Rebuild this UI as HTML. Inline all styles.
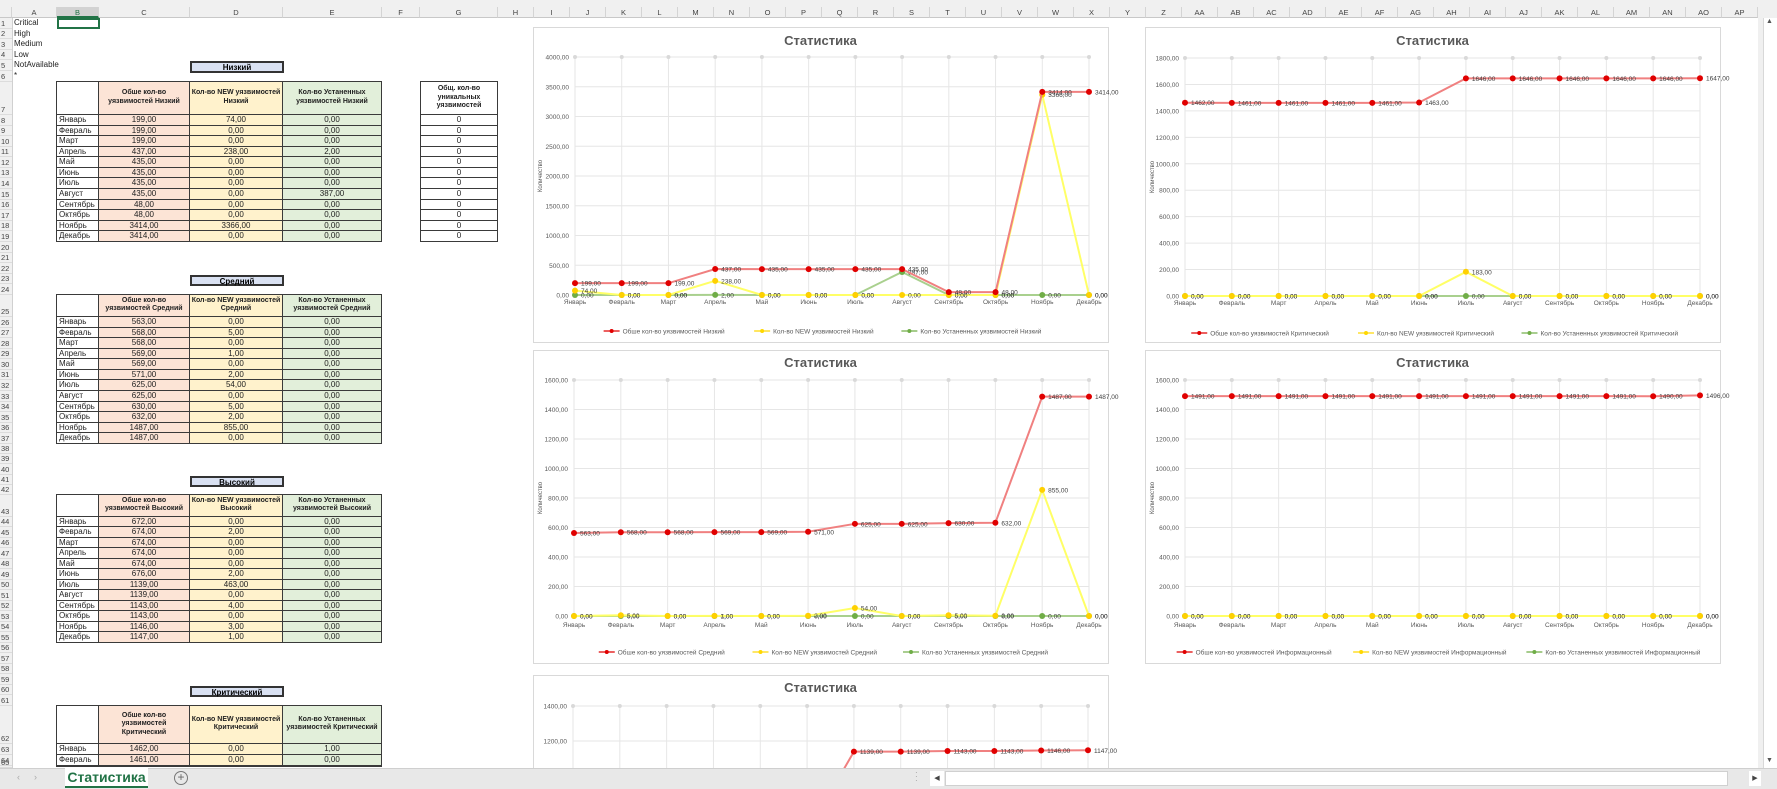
<!DOCTYPE html>
<html><head><meta charset="utf-8">
<style>
*{margin:0;padding:0;box-sizing:border-box}
html,body{width:1777px;height:789px;overflow:hidden}
body{background:#fff;font-family:"Liberation Sans",Arial,sans-serif;position:relative}
.a{position:absolute;white-space:nowrap}
.c{position:absolute;font-size:8px;line-height:10px;color:#222;overflow:hidden;white-space:nowrap;border:1px solid #3a3a3a;margin:-1px 0 0 -1px}
.h{font-weight:bold;font-size:7px;text-align:center;white-space:normal;line-height:8.5px;display:flex;align-items:center;justify-content:center;color:#222}
.rn{position:absolute;left:0;width:12px;font-size:7.5px;color:#444;text-align:left;padding-left:1px;background:#f0f0f0;border-bottom:1px solid #dcdcdc;display:flex;align-items:flex-end}
.ch{position:absolute;top:7px;height:11px;font-size:7.5px;color:#444;text-align:center;line-height:11px;background:#f0f0f0;border-right:1px solid #d4d4d4;border-bottom:1px solid #c8c8c8}
.ttl{position:absolute;background:#d9e1f2;border:2px solid #333;font-weight:bold;font-size:8px;text-align:center;line-height:9px}
</style></head><body>
<div class="a" style="left:0;top:0;width:1777px;height:7px;background:#f0f0f0"></div>
<div id="root"></div>
<svg id="sv" class="a" style="left:0;top:0" width="1777" height="768" xmlns="http://www.w3.org/2000/svg"></svg>
<div class="a" style="left:1758px;top:7px;width:19px;height:761px;background:#f0f0f0"></div>
<div class="a" style="left:1763px;top:18px;width:14px;height:750px;background:#fff;border-left:1px solid #d8d8d8"></div>
<div class="a" style="left:1766px;top:18px;font-size:7px;color:#555">▲</div>
<div class="a" style="left:1766px;top:757px;font-size:7px;color:#555">▼</div>
<div class="a" style="left:0;top:768px;width:1777px;height:21px;background:#e8e8e8;border-top:1px solid #cfcfcf"></div>
<div class="a" style="left:17px;top:772px;font-size:9px;color:#aaa">‹</div>
<div class="a" style="left:34px;top:772px;font-size:9px;color:#aaa">›</div>
<div class="a" style="left:65px;top:768px;width:83px;height:20px;background:#fff;border-bottom:2px solid #217346;font-weight:bold;font-size:14px;color:#217346;text-align:center;line-height:18px">Статистика</div>
<div class="a" style="left:174px;top:771px;width:14px;height:14px;border:1px solid #777;border-radius:50%;font-size:12px;line-height:11px;text-align:center;color:#666">+</div>
<div class="a" style="left:915px;top:771px;font-size:8px;color:#999;line-height:4px">·<br>·<br>·</div>
<div class="a" style="left:930px;top:771px;width:14px;height:15px;background:#fff;font-size:7px;color:#444;line-height:15px;text-align:center">◀</div>
<div class="a" style="left:945px;top:771px;width:783px;height:15px;background:#fff;border:1px solid #d0d0d0"></div>
<div class="a" style="left:1749px;top:771px;width:12px;height:15px;background:#fff;font-size:7px;color:#444;line-height:15px;text-align:center">▶</div>
<script>
const root=document.getElementById('root');
let H='';
function div(cls,st,txt){H+=`<div class="${cls}" style="${st}">${txt||''}</div>`;}
const cols=[['A',12,57],['B',57,99],['C',99,190],['D',190,283],['E',283,382],['F',382,420],['G',420,498]];
const L='HIJKLMNOPQRSTUVWXYZ'.split('').concat(['AA','AB','AC','AD','AE','AF','AG','AH','AI','AJ','AK','AL','AM','AN','AO','AP']);
L.forEach((l,i)=>cols.push([l,498+i*36,534+i*36]));
div('ch','left:0;width:12px','');
cols.forEach(c=>div('ch',`left:${c[1]}px;width:${c[2]-c[1]}px;${c[0]=='B'?'background:#d2d2d2;border-bottom:2px solid #217346;color:#217346':''}`,c[0]));
const rows=[];let y=18;
function add(n,h){for(let i=0;i<n;i++){rows.push([y,h]);y+=h;}}
add(6,10.6);add(1,33.4);add(12,10.58);add(5,10.6);add(1,22);add(12,10.58);add(5,10.2);add(1,22);add(12,10.5);add(6,10.5);add(1,38);add(5,10.8);
rows.forEach((r,i)=>{if(r[0]<766)div('rn',`top:${r[0]}px;height:${Math.min(r[1],768-r[0])}px`,i+1);});
div('a','left:12px;top:18px;width:1px;height:750px;background:#d0d0d0');
['Critical','High','Medium','Low','NotAvailable','*'].forEach((t,i)=>div('a',`left:14px;top:${rows[i][0]}px;font-size:8px;line-height:10px;color:#222`,t));
div('a','left:57px;top:18px;width:43px;height:11px;border:2px solid #217346');
const M=['Январь','Февраль','Март','Апрель','Май','Июнь','Июль','Август','Сентябрь','Октябрь','Ноябрь','Декабрь'];
function f(v){return v.toFixed(2).replace('.',',');}
function table(name,tRow,hRow,C,D,E){
  const t=rows[tRow];div('ttl',`left:190px;top:${t[0]+1}px;width:94px;height:${t[1]+1}px`,name);
  const h=rows[hRow];
  div('c h',`left:57px;top:${h[0]}px;width:43px;height:${h[1]+1}px;background:#fff`,'');
  div('c h',`left:99px;top:${h[0]}px;width:92px;height:${h[1]+1}px;background:#fce4d6;padding:0 4px`,'Обше кол-во уязвимостей '+name);
  div('c h',`left:190px;top:${h[0]}px;width:94px;height:${h[1]+1}px;background:#fff2cc`,'Кол-во NEW уязвимостей '+name);
  div('c h',`left:283px;top:${h[0]}px;width:100px;height:${h[1]+1}px;background:#e2efda`,'Кол-во Устаненных уязвимостей '+name);
  for(let i=0;i<12;i++){const r=rows[hRow+1+i];if(!r||r[0]>=766)break;const hh=Math.min(r[1]+1,768-r[0]);const s=`top:${r[0]}px;height:${hh}px;line-height:${r[1]}px;`;
    div('c',s+'left:57px;width:43px;background:#fff;padding-left:2px',M[i]);
    div('c',s+'left:99px;width:92px;background:#fce4d6;text-align:center',f(C[i]));
    div('c',s+'left:190px;width:94px;background:#fff2cc;text-align:center',f(D[i]));
    div('c',s+'left:283px;width:100px;background:#e2efda;text-align:center',f(E[i]));}
}
const z=Array(12).fill(0);
table('Низкий',4,6,[199,199,199,437,435,435,435,435,48,48,3414,3414],[74,0,0,238,0,0,0,0,0,0,3366,0],[0,0,0,2,0,0,0,387,0,0,0,0]);
table('Средний',22,24,[563,568,568,569,569,571,625,625,630,632,1487,1487],[0,5,0,1,0,2,54,0,5,2,855,0],z);
table('Высокий',40,42,[672,674,674,674,674,676,1139,1139,1143,1143,1146,1147],[0,2,0,0,0,2,463,0,4,0,3,1],z);
table('Критический',59,61,[1462,1461,1461,1461,1461,1463,1646,1646,1646,1646,1646,1647],[0,0,0,0,0,0,183,0,0,0,0,0],[1,0,0,0,0,0,0,0,0,0,0,0]);
{const h=rows[6];div('c h',`left:421px;top:${h[0]}px;width:78px;height:${h[1]+1}px;background:#fff;border-width:1px`,'Общ. кол-во уникальных уязвимостей');
for(let i=0;i<12;i++){const r=rows[7+i];div('c',`left:421px;top:${r[0]}px;width:78px;height:${r[1]+1}px;line-height:${r[1]}px;text-align:center;background:#fff`,'0');}}
root.innerHTML=H;
let S='';
function chart(o){
  const {bx,by,bw,bh,pl,pr,pt,pb,max,step,R,Y,G,name,my,ly,ty}=o;
  S+=`<rect x="${bx+.5}" y="${by+.5}" width="${bw}" height="${bh}" fill="#fff" stroke="#d9d9d9"/>`;
  S+=`<text x="${bx+bw/2}" y="${ty}" font-size="13" font-weight="bold" fill="#595959" text-anchor="middle">Статистика</text>`;
  const yv=v=>pb-(v/max)*(pb-pt);
  for(let v=0;v<=max;v+=step){const yy=yv(v);S+=`<line x1="${pl}" x2="${pr}" y1="${yy}" y2="${yy}" stroke="#e6e6e6"/><text x="${pl-6}" y="${yy+2.5}" font-size="6.5" fill="#595959" text-anchor="end">${f(v)}</text>`;}
  const xs=i=>pl+i*(pr-pl)/11;
  for(let i=0;i<12;i++){const x=xs(i);S+=`<line x1="${x}" x2="${x}" y1="${pt}" y2="${pb}" stroke="#e6e6e6"/><circle cx="${x}" cy="${pt}" r="2" fill="#d9d9d9"/><text x="${x}" y="${my}" font-size="6.5" fill="#595959" text-anchor="middle">${M[i]}</text>`;}
  S+=`<text transform="translate(${bx+9},${(pt+pb)/2}) rotate(-90)" font-size="6" fill="#595959" text-anchor="middle">Количество</text>`;
  [[G,'#a9d08e','#70ad47'],[Y,'#ffff66','#ffd000'],[R,'#f08080','#e00000']].forEach(([d,lc,mc])=>{
    S+=`<polyline fill="none" stroke="${lc}" stroke-width="2" points="${d.map((v,i)=>xs(i)+','+yv(v)).join(' ')}"/>`;
    d.forEach((v,i)=>{S+=`<circle cx="${xs(i)}" cy="${yv(v)}" r="3" fill="${mc}"/><text x="${xs(i)+6}" y="${yv(v)+2.5}" font-size="6.5" fill="#404040">${f(v)}</text>`;});
  });
  const items=[['#e00000','Обше кол-во уязвимостей '+name],['#ffd700','Кол-во NEW уязвимостей '+name],['#70ad47','Кол-во Устаненных уязвимостей '+name]];
  const ws=items.map(it=>19+it[1].length*3.25);const gap=34;
  let x=bx+bw/2-(ws.reduce((a,b)=>a+b,0)+gap*2)/2;
  items.forEach(([c,t],k)=>{const dx=x+8;
    S+=`<line x1="${dx-8}" x2="${dx+8}" y1="${ly}" y2="${ly}" stroke="${c}" stroke-width="1.2"/><circle cx="${dx}" cy="${ly}" r="2" fill="${c}"/><text x="${dx+11}" y="${ly+2.3}" font-size="6.5" fill="#595959">${t}</text>`;
    x+=ws[k]+gap;});
}
chart({bx:533,by:27,bw:575,bh:315,pl:575,pr:1089,pt:57,pb:295,max:4000,step:500,R:[199,199,199,437,435,435,435,435,48,48,3414,3414],Y:[74,0,0,238,0,0,0,0,0,0,3366,0],G:[0,0,0,2,0,0,0,387,0,0,0,0],name:'Низкий',my:304,ly:331,ty:45});
chart({bx:1145,by:27,bw:575,bh:315,pl:1185,pr:1700,pt:58,pb:296,max:1800,step:200,R:[1462,1461,1461,1461,1461,1463,1646,1646,1646,1646,1646,1647],Y:[0,0,0,0,0,0,183,0,0,0,0,0],G:z,name:'Критический',my:305,ly:333,ty:45});
chart({bx:533,by:350,bw:575,bh:313,pl:574,pr:1089,pt:380,pb:616,max:1600,step:200,R:[563,568,568,569,569,571,625,625,630,632,1487,1487],Y:[0,5,0,1,0,2,54,0,5,2,855,0],G:z,name:'Средний',my:627,ly:652,ty:367});
chart({bx:1145,by:350,bw:575,bh:313,pl:1185,pr:1700,pt:380,pb:616,max:1600,step:200,R:[1491,1491,1491,1491,1491,1491,1491,1491,1491,1491,1490,1496],Y:z,G:z,name:'Информационный',my:627,ly:652,ty:367});
chart({bx:533,by:675,bw:575,bh:300,pl:573,pr:1088,pt:706,pb:951,max:1400,step:200,R:[672,674,674,674,674,676,1139,1139,1143,1143,1146,1147],Y:[0,2,0,0,0,2,463,0,4,0,3,1],G:z,name:'Высокий',my:960,ly:985,ty:692});
document.getElementById('sv').innerHTML=S;
</script>
</body></html>
